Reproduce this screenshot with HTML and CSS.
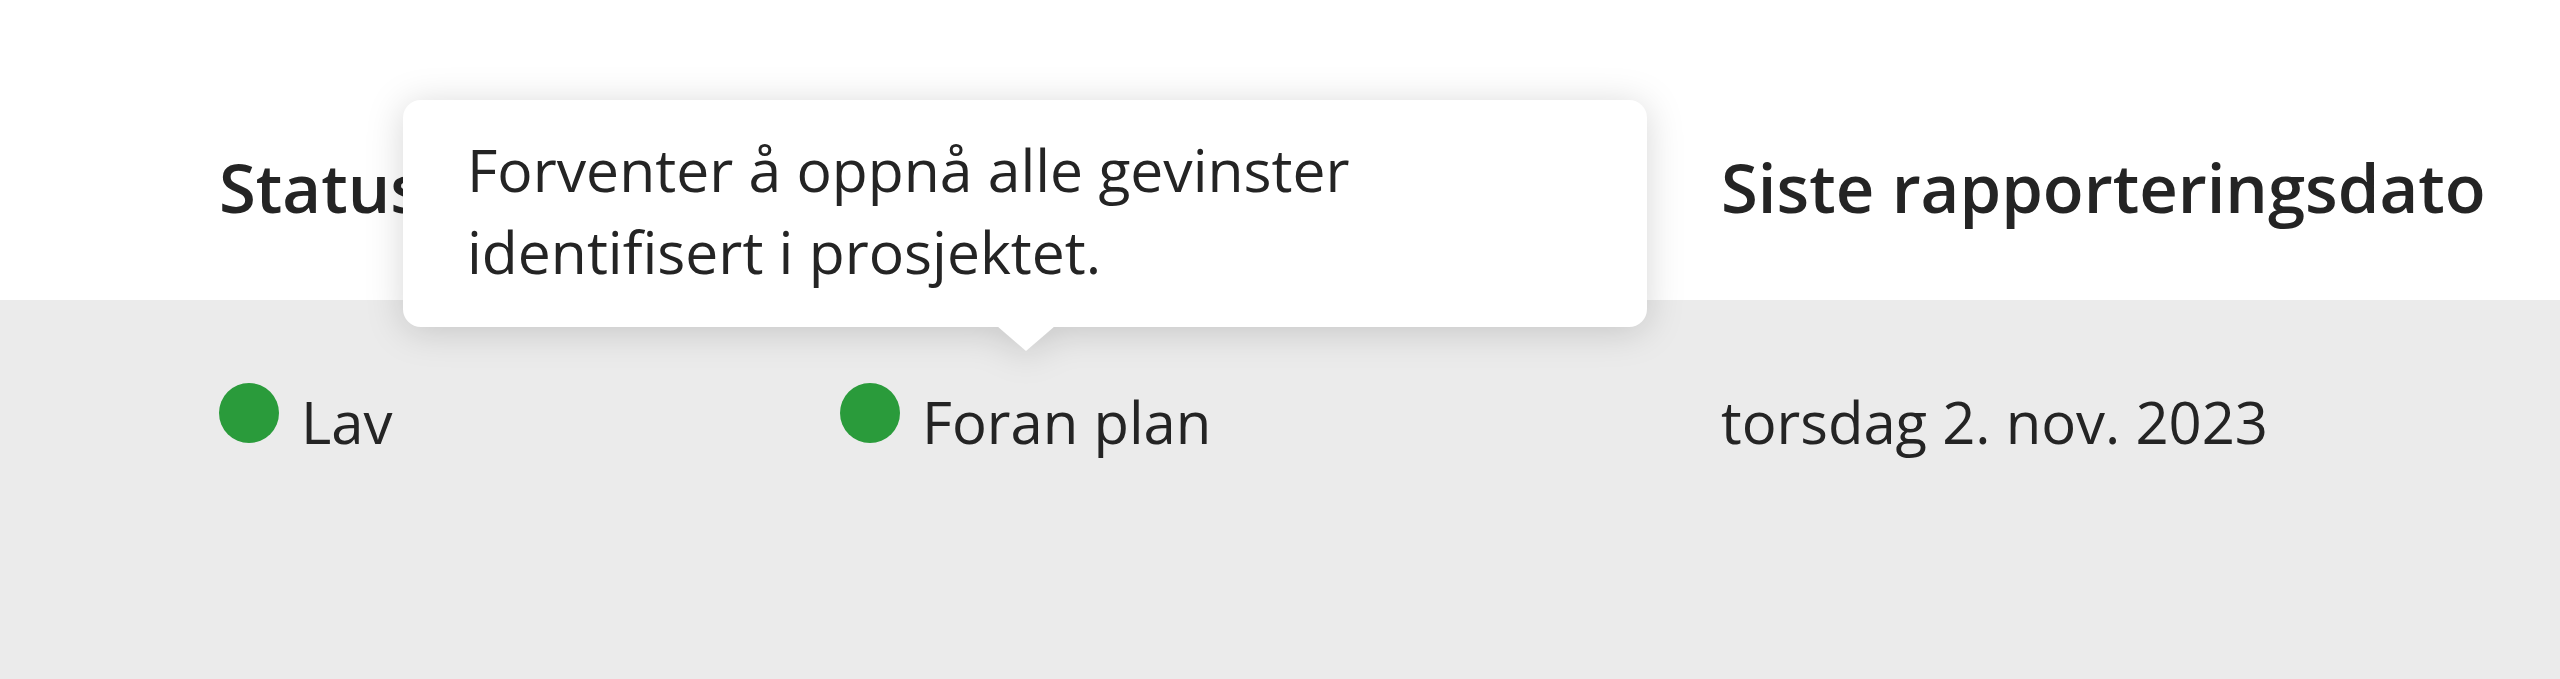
FILE: index.html
```html
<!DOCTYPE html>
<html lang="no">
<head>
<meta charset="utf-8">
<title>Gevinster</title>
<link rel="stylesheet" href="styles.css">
</head>
<body>
<div class="table">
  <div class="row head">
    <div class="cell"><span class="h">Status</span></div>
    <div class="cell"></div>
    <div class="cell"><span class="h">Siste rapporteringsdato</span></div>
  </div>
  <div class="row body">
    <div class="cell status"><span class="dot"></span><span class="txt">Lav</span></div>
    <div class="cell status"><span class="dot"></span><span class="txt">Foran plan</span></div>
    <div class="cell"><span class="txt">torsdag 2. nov. 2023</span></div>
  </div>
</div>
<div class="tooltip">
  <p class="tip-text">Forventer å oppnå alle gevinster identifisert i prosjektet.</p>
</div>
</body>
</html>
```
FILE: styles.css
```css
html, body {
  margin: 0;
  padding: 0;
  height: 100%;
}
body {
  background: #ebebeb;
  font-family: "Open Sans", "Noto Sans", sans-serif;
  color: #242424;
  overflow: hidden;
}
.table {
  display: flex;
  flex-direction: column;
  height: 100%;
}
.row {
  display: grid;
  grid-template-columns: 621px 881px 1fr;
  padding-left: 219px;
}
.head {
  background: #ffffff;
  height: 300px;
  box-sizing: border-box;
  padding-top: 147px;
}
.h {
  font-size: 67px;
  font-weight: 600;
  line-height: 1.2;
  white-space: nowrap;
  display: block;
}
.body {
  flex: 1;
  background: #ebebeb;
  padding-top: 83px;
  align-items: start;
}
.cell {
  display: flex;
  align-items: flex-start;
  min-width: 0;
}
.status {
  gap: 22px;
}
.dot {
  width: 60px;
  height: 60px;
  border-radius: 50%;
  background: #2a9b3b;
  flex: none;
}
.txt {
  font-size: 58px;
  line-height: 1.2;
  margin-top: 4px;
  white-space: nowrap;
}
.tooltip {
  position: absolute;
  left: 403px;
  top: 100px;
  width: 1244px;
  box-sizing: border-box;
  padding: 28px 280px 35px 64px;
  background: #ffffff;
  border-radius: 18px;
  filter: drop-shadow(0 4px 18px rgba(0, 0, 0, 0.16));
}
.tooltip::after {
  content: "";
  position: absolute;
  left: 594px;
  bottom: -24px;
  width: 58px;
  height: 25px;
  background: #ffffff;
  clip-path: polygon(0 0, 100% 0, 50% 100%);
}
.tip-text {
  margin: 0;
  font-size: 58.8px;
  line-height: 82px;
}
```
